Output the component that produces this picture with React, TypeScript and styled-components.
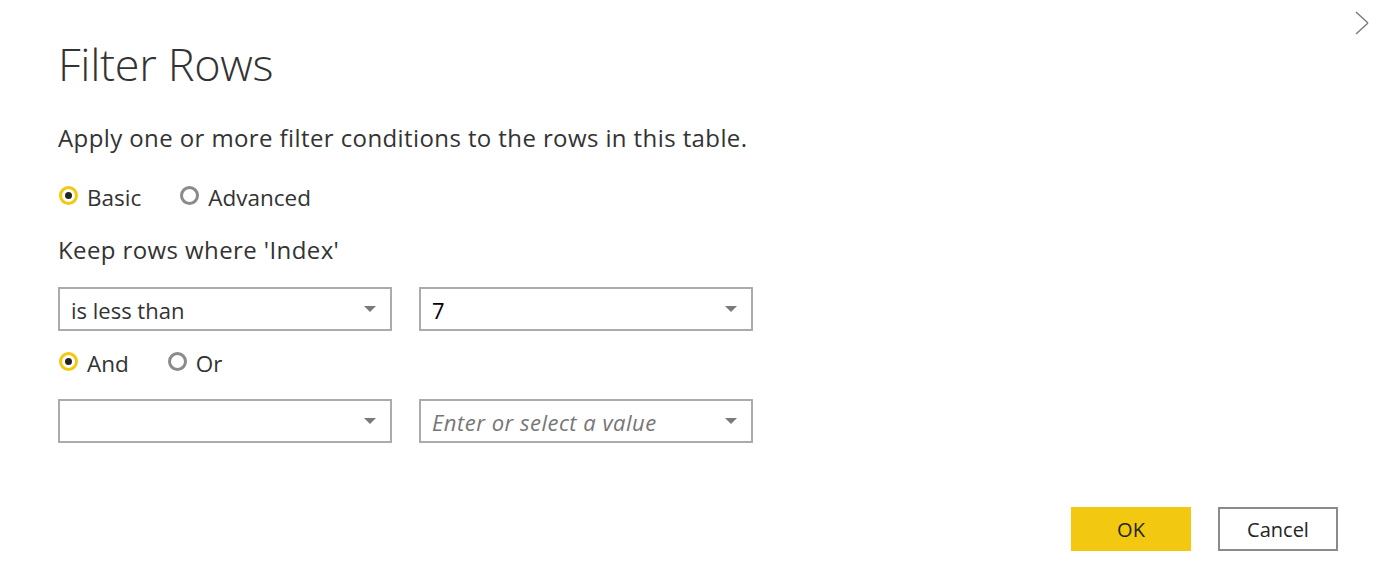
import React from "react";
import styled, { createGlobalStyle } from "styled-components";

const GlobalStyle = createGlobalStyle`
  html, body {
    margin: 0;
    padding: 0;
    background: #ffffff;
  }
  body {
    font-family: "Open Sans", "Noto Sans", "Liberation Sans", sans-serif;
    color: #333333;
  }
  * { box-sizing: border-box; }
`;

const Dialog = styled.div`
  position: relative;
  width: 1376px;
  height: 583px;
  background: #ffffff;
  padding: 36px 38px 0 58px;
  display: flex;
  flex-direction: column;
`;

const CloseButton = styled.button`
  position: absolute;
  top: 10px;
  right: 2px;
  width: 20px;
  height: 26px;
  padding: 0;
  border: none;
  background: transparent;
  display: flex;
  align-items: center;
  justify-content: center;
`;

const Title = styled.h1`
  margin: 0;
  font-size: 45px;
  line-height: 56px;
  font-weight: 300;
  color: #333333;
  letter-spacing: -0.3px;
`;

const Text = styled.p<{ $mt: number }>`
  margin: ${(p) => p.$mt}px 0 0 0;
  font-size: 24px;
  line-height: 28px;
  letter-spacing: 0.4px;
  color: #333333;
`;

const RadioGroup = styled.div<{ $mt: number }>`
  margin-top: ${(p) => p.$mt}px;
  display: flex;
  align-items: flex-start;
  gap: 38px;
  height: 28px;
`;

const RadioOption = styled.label`
  display: flex;
  align-items: flex-start;
  gap: 9px;
  font-size: 22.5px;
  line-height: 28px;
  color: #333333;
`;

const RadioCircle = styled.span<{ $checked: boolean }>`
  width: 19px;
  height: 19px;
  margin-top: 2px;
  margin-left: 1px;
  border-radius: 50%;
  border: 3px solid ${(p) => (p.$checked ? "#f2c811" : "#8a8a8a")};
  display: flex;
  align-items: center;
  justify-content: center;
  flex-shrink: 0;
  &::after {
    content: "";
    width: 7px;
    height: 7px;
    border-radius: 50%;
    background: ${(p) => (p.$checked ? "#252423" : "transparent")};
  }
`;

const FieldRow = styled.div<{ $mt: number }>`
  margin-top: ${(p) => p.$mt}px;
  display: flex;
  gap: 27px;
`;

const Select = styled.div`
  width: 334px;
  height: 44px;
  border: 2px solid #ababab;
  background: #ffffff;
  display: flex;
  align-items: center;
  padding: 2px 14px 0 11px;
`;

const SelectValue = styled.span<{ $variant?: "normal" | "number" | "placeholder" }>`
  flex: 1;
  font-size: 22px;
  line-height: 28px;
  white-space: nowrap;
  letter-spacing: ${(p) => (p.$variant === "placeholder" ? "0.5px" : "0")};
  color: ${(p) =>
    p.$variant === "placeholder" ? "#767676" : p.$variant === "number" ? "#000000" : "#333333"};
  font-style: ${(p) => (p.$variant === "placeholder" ? "italic" : "normal")};
`;

const Caret = styled.span`
  width: 0;
  height: 0;
  border-left: 6px solid transparent;
  border-right: 6px solid transparent;
  border-top: 6px solid #7a7a7a;
  margin-top: -3px;
`;

const Footer = styled.div`
  margin-top: 64px;
  display: flex;
  justify-content: flex-end;
  gap: 27px;
`;

const Button = styled.button<{ $primary?: boolean }>`
  width: 120px;
  height: 44px;
  font-family: "Open Sans", "Noto Sans", "Liberation Sans", sans-serif;
  font-size: 20px;
  color: #252423;
  background: ${(p) => (p.$primary ? "#f2c811" : "#ffffff")};
  border: ${(p) => (p.$primary ? "none" : "2px solid #8a8a8a")};
  padding: 0;
  display: flex;
  align-items: center;
  justify-content: center;
`;

function Radio({ label, checked }: { label: string; checked: boolean }) {
  return (
    <RadioOption>
      <RadioCircle $checked={checked} />
      {label}
    </RadioOption>
  );
}

function Dropdown({
  value,
  variant,
}: {
  value: string;
  variant?: "normal" | "number" | "placeholder";
}) {
  return (
    <Select>
      <SelectValue $variant={variant}>{value}</SelectValue>
      <Caret />
    </Select>
  );
}

export default function App() {
  return (
    <>
      <GlobalStyle />
      <Dialog>
        <CloseButton aria-label="Close">
          <svg width="20" height="26" viewBox="0 0 20 26">
            <path
              d="M2 2 L14 13 M2 24 L14 13"
              stroke="#7a7a7a"
              strokeWidth="1.4"
              fill="none"
            />
          </svg>
        </CloseButton>
        <Title>Filter Rows</Title>
        <Text $mt={32}>Apply one or more filter conditions to the rows in this table.</Text>
        <RadioGroup $mt={32}>
          <Radio label="Basic" checked />
          <Radio label="Advanced" checked={false} />
        </RadioGroup>
        <Text $mt={24}>Keep rows where 'Index'</Text>
        <FieldRow $mt={23}>
          <Dropdown value="is less than" />
          <Dropdown value="7" variant="number" />
        </FieldRow>
        <RadioGroup $mt={19}>
          <Radio label="And" checked />
          <Radio label="Or" checked={false} />
        </RadioGroup>
        <FieldRow $mt={21}>
          <Dropdown value="" />
          <Dropdown value="Enter or select a value" variant="placeholder" />
        </FieldRow>
        <Footer>
          <Button $primary>OK</Button>
          <Button>Cancel</Button>
        </Footer>
      </Dialog>
    </>
  );
}
